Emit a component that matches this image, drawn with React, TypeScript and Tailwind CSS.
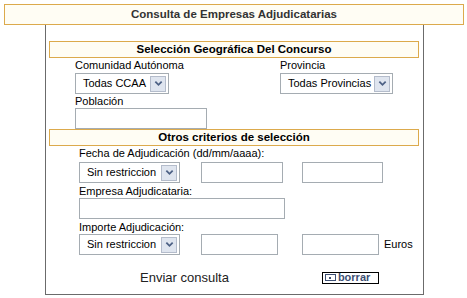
import React from "react";

function XpSelect({ label, width }: { label: string; width: string }) {
  return (
    <div
      className={`flex h-[21px] ${width} items-center justify-between border border-[#a5acb2] bg-white pl-[7px] pr-[2px]`}
    >
      <span className="whitespace-nowrap text-[11px] leading-none text-black">{label}</span>
      <span className="flex h-[16px] w-[16px] shrink-0 items-center justify-center border border-[#b4bccb] bg-[#dfe5ef]">
        <svg viewBox="0 0 10 10" className="h-[9px] w-[9px]" aria-hidden>
          <path
            d="M1.5 3 5 6.5 8.5 3"
            fill="none"
            stroke="#4d6185"
            strokeWidth={2}
          />
        </svg>
      </span>
    </div>
  );
}

function TextBox({ width }: { width: string }) {
  return <div className={`h-[21px] ${width} border border-[#a5acb2] bg-white`} />;
}

function SectionHeader({ children }: { children: React.ReactNode }) {
  return (
    <div className="ml-[3px] flex h-[17px] w-[370px] items-center justify-center border border-[#dcaa4c] bg-[#fffdf4] text-[11.5px] font-bold leading-none text-black">
      {children}
    </div>
  );
}

export default function App() {
  return (
    <div
      className="h-[298px] w-[467px] bg-white pt-[4px] text-[11px] text-black"
      style={{ fontFamily: '"Liberation Sans", Arial, sans-serif' }}
    >
      <div className="ml-[4px] flex h-[21px] w-[460px] items-center justify-center border border-[#dcaa4c] bg-[#fffdf4] text-[11.5px] font-bold text-[#333]">
        Consulta de Empresas Adjudicatarias
      </div>

      <div className="ml-[45px] h-[270px] w-[379px] border-x border-b border-[#6b6b6b] pt-[16px]">
        <SectionHeader>Selección Geográfica Del Concurso</SectionHeader>

        <div className="flex">
          <div className="ml-[29px] w-[205px]">
            <div className="mt-[1px] h-[13px] leading-[13px]">Comunidad Autónoma</div>
            <div className="mt-[1px]">
              <XpSelect label="Todas CCAA" width="w-[94px]" />
            </div>
            <div className="mt-[1px] h-[13px] leading-[13px]">Población</div>
            <TextBox width="w-[132px]" />
          </div>
          <div>
            <div className="mt-[1px] h-[13px] leading-[13px]">Provincia</div>
            <div className="mt-[1px]">
              <XpSelect label="Todas Provincias" width="w-[113px]" />
            </div>
          </div>
        </div>

        <SectionHeader>Otros criterios de selección</SectionHeader>

        <div className="ml-[33px]">
          <div className="mt-[1px] h-[13px] leading-[13px]">Fecha de Adjudicación (dd/mm/aaaa):</div>
          <div className="mt-[2px] flex items-center">
            <XpSelect label="Sin restriccion" width="w-[101px]" />
            <div className="ml-[21px]">
              <TextBox width="w-[82px]" />
            </div>
            <div className="ml-[19px]">
              <TextBox width="w-[81px]" />
            </div>
          </div>
          <div className="mt-[2px] h-[13px] leading-[13px]">Empresa Adjudicataria:</div>
          <TextBox width="w-[206px]" />
          <div className="mt-[2px] h-[13px] leading-[13px]">Importe Adjudicación:</div>
          <div className="flex items-center">
            <XpSelect label="Sin restriccion" width="w-[101px]" />
            <div className="ml-[21px]">
              <TextBox width="w-[77px]" />
            </div>
            <div className="ml-[24px]">
              <TextBox width="w-[77px]" />
            </div>
            <span className="ml-[5px]">Euros</span>
          </div>
        </div>

        <div className="mt-[16px] flex items-center">
          <span className="ml-[94px] text-[13px] leading-none text-[#222]">Enviar consulta</span>
          <div className="ml-[93px] flex h-[12px] w-[57px] items-center border border-black bg-white pl-[2px]">
            <span className="flex h-[7px] w-[11px] items-center justify-center border border-[#3d4f73]">
              <span className="h-[2px] w-[2px] bg-[#3d4f73]" />
            </span>
            <span className="ml-[2px] text-[11px] font-bold leading-none text-[#3d4f73]">borrar</span>
          </div>
        </div>
      </div>
    </div>
  );
}
